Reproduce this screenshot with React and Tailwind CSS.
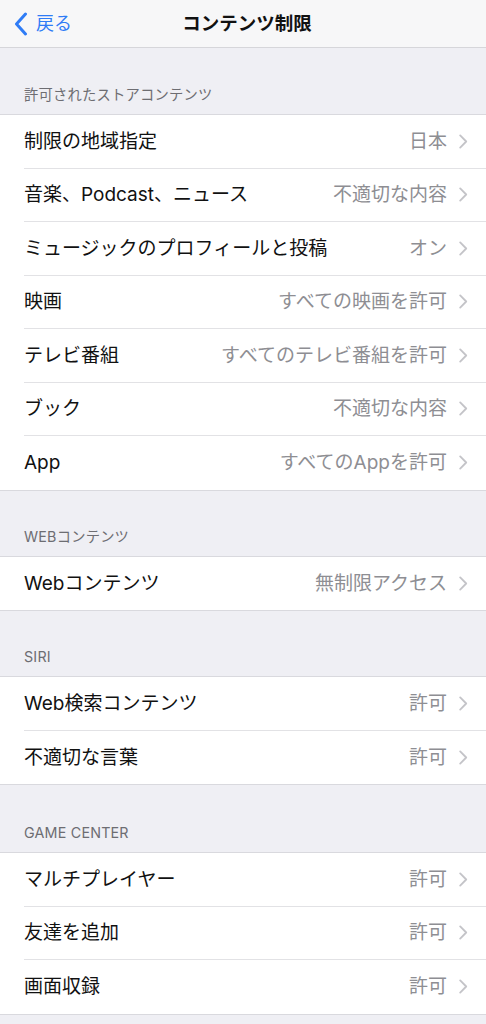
import React from "react";

const FONT = { fontFamily: '"Inter", "Noto Sans CJK JP", sans-serif' };

function Chevron() {
  return (
    <svg width="9" height="15" viewBox="0 0 9 15" className="shrink-0">
      <path d="M1.2 1.4 L7.2 7.5 L1.2 13.6" fill="none" stroke="#c4c4c8" strokeWidth="1.8" strokeLinecap="round" strokeLinejoin="round" />
    </svg>
  );
}

function Row({ label, value, last }) {
  return (
    <div className="flex h-[53.5px] items-stretch pl-[24px]">
      <div className={"flex flex-1 items-center pr-[18px] " + (last ? "" : "border-b border-[#e2e2e5]")}>
        <span className="flex-1 text-[19px] leading-none text-[#111] whitespace-nowrap">{label}</span>
        <span className="text-[19px] leading-none text-[#8e8e93] whitespace-nowrap">{value}</span>
        <span className="ml-[12px] flex items-center"><Chevron /></span>
      </div>
    </div>
  );
}

function Header({ title, h = "h-[65px]" }) {
  return (
    <div className={h + " flex items-end px-[24px] pb-[11px]"}>
      <span className="text-[14.3px] leading-[16px] text-[#6d6d72] tracking-[0.2px]">{title}</span>
    </div>
  );
}

function Group({ rows }) {
  return (
    <div className="bg-white border-y border-[#d9d9de]">
      {rows.map((r, i) => (
        <Row key={i} label={r[0]} value={r[1]} last={i === rows.length - 1} />
      ))}
    </div>
  );
}

export default function App() {
  return (
    <div className="min-h-[1024px] bg-[#efeff4]" style={FONT}>
      <div className="relative flex h-[48px] items-center justify-center border-b border-[#d6d6da] bg-[#f7f7f8]">
        <div className="absolute left-[14px] top-0 flex h-full items-center gap-[8px]">
          <svg width="14" height="24" viewBox="0 0 14 24">
            <path d="M11.5 2 L2.5 12 L11.5 22" fill="none" stroke="#2f7cf6" strokeWidth="3" strokeLinecap="round" strokeLinejoin="round" />
          </svg>
          <span className="text-[18px] leading-none text-[#2f7cf6]">戻る</span>
        </div>
        <span className="pl-[8px] text-[18.5px] font-semibold leading-none text-[#111]">コンテンツ制限</span>
      </div>
      <Header title="許可されたストアコンテンツ" h="h-[66px]" />
      <Group
        rows={[
          ["制限の地域指定", "日本"],
          ["音楽、Podcast、ニュース", "不適切な内容"],
          ["ミュージックのプロフィールと投稿", "オン"],
          ["映画", "すべての映画を許可"],
          ["テレビ番組", "すべてのテレビ番組を許可"],
          ["ブック", "不適切な内容"],
          ["App", "すべてのAppを許可"],
        ]}
      />
      <Header title="WEBコンテンツ" />
      <Group rows={[["Webコンテンツ", "無制限アクセス"]]} />
      <Header title="SIRI" />
      <Group
        rows={[
          ["Web検索コンテンツ", "許可"],
          ["不適切な言葉", "許可"],
        ]}
      />
      <Header title="GAME CENTER" h="h-[67px]" />
      <Group
        rows={[
          ["マルチプレイヤー", "許可"],
          ["友達を追加", "許可"],
          ["画面収録", "許可"],
        ]}
      />
    </div>
  );
}
